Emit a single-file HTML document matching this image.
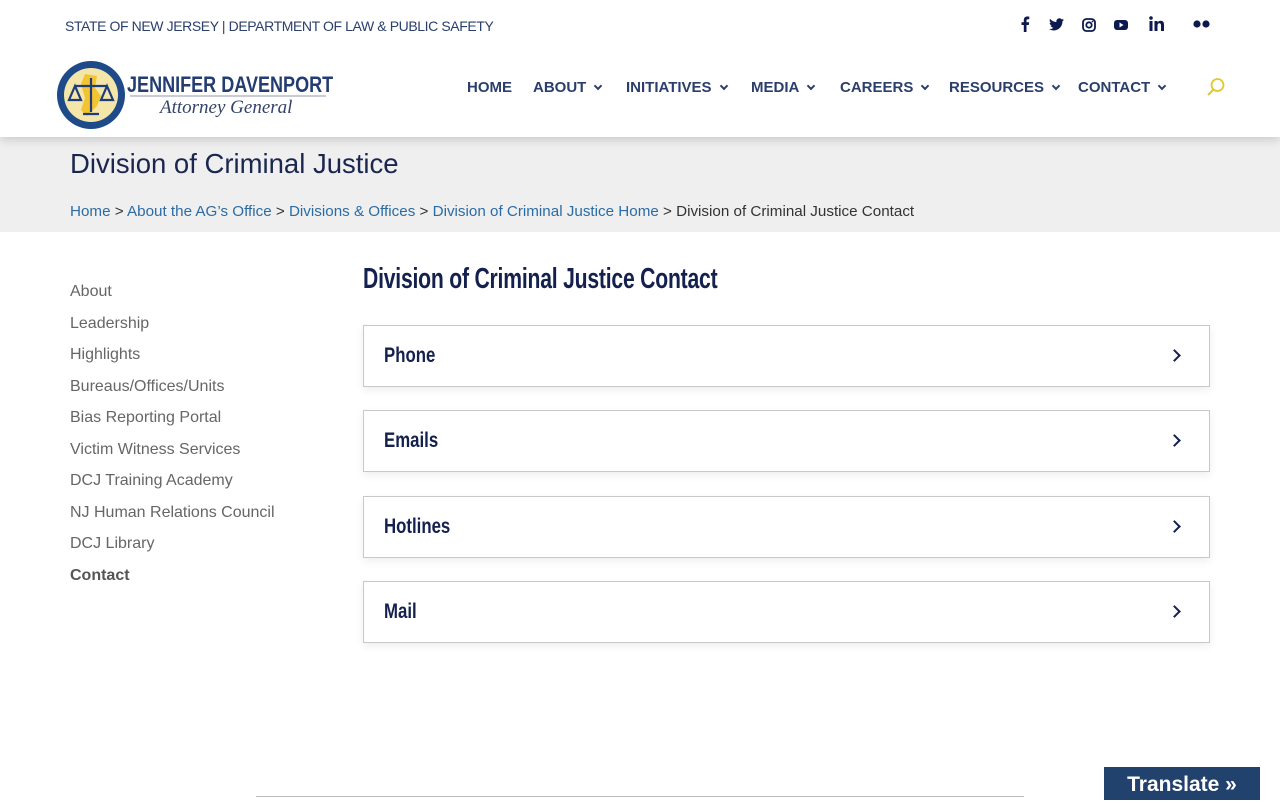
<!DOCTYPE html>
<html><head><meta charset="utf-8"><style>
*{margin:0;padding:0;box-sizing:border-box}
body{width:1280px;height:800px;overflow:hidden;background:#fff;font-family:"Liberation Sans",sans-serif;position:relative}
.top{position:absolute;left:65px;top:18px;font-size:14px;color:#2a3f6b;letter-spacing:-0.4px}
.soc{position:absolute;top:16px;color:#0d1a4f}
header{position:absolute;left:0;top:0;width:1280px;height:137px;background:#fff;box-shadow:0 2px 10px rgba(0,0,0,.18);z-index:2}
.nav{position:absolute;top:79px;font-size:15px;font-weight:bold;color:#2a3f6b;white-space:nowrap}
.nav span{position:absolute;white-space:nowrap}
.chev{display:inline-block;width:6px;height:6px;border-right:2px solid #2a3f6b;border-bottom:2px solid #2a3f6b;transform:rotate(45deg);margin-left:9px;position:relative;top:-3px}
.band{position:absolute;top:137px;left:0;width:1280px;height:95px;background:#efefef}
.band h1{position:absolute;left:70px;top:11px;font-weight:normal;font-size:27.5px;color:#1a2650}
.bc{position:absolute;left:70px;top:66px;font-size:15.2px;color:#333;white-space:nowrap}
.bc a{color:#2b6ca5;text-decoration:none}
.side{position:absolute;left:70px;top:283px;font-size:16px;color:#666}
.side div{height:31.5px}
.h2{position:absolute;left:363px;top:263px;font-size:29px;font-weight:bold;color:#14204d;transform:scaleX(.73);transform-origin:left;white-space:nowrap;letter-spacing:-.3px}
.acc{position:absolute;left:363px;width:847px;height:62px;border:1px solid #c8c8c8;box-shadow:0 3px 8px rgba(0,0,0,.07)}
.acc b{position:absolute;left:20px;top:18px;font-size:21px;color:#14204d;transform:scaleX(.8);transform-origin:left}
.acc i{position:absolute;right:30px;top:25px;width:9px;height:9px;border-right:2px solid #14204d;border-top:2px solid #14204d;transform:rotate(45deg)}
.tr{position:absolute;left:1104px;top:767px;width:156px;height:33px;background:#22426e;color:#fff;font-weight:bold;font-size:21px;text-align:center;line-height:36px}
.line{position:absolute;left:256px;top:796px;width:768px;height:1px;background:#bbb}
</style></head><body>
<header>
<div class="top">STATE OF NEW JERSEY | DEPARTMENT OF LAW &amp; PUBLIC SAFETY</div>
<svg class="soc" style="left:1020px" width="10" height="16" viewBox="0 0 10 16"><path d="M6.5 16V9h2.3l.4-2.8H6.5V4.5c0-.8.3-1.3 1.4-1.3h1.4V.7C9 .6 8.2.5 7.3.5 5.2.5 3.8 1.8 3.8 4.1v2.1H1.5V9h2.3v7z" fill="#0d1a4f"/></svg>
<svg class="soc" style="left:1049px;top:18px" width="15" height="13" viewBox="0 0 24 20"><path d="M24 2.4c-.9.4-1.8.7-2.8.8 1-.6 1.8-1.6 2.2-2.7-1 .6-2 1-3.1 1.2A4.9 4.9 0 0 0 11.900 6C7.7 5.8 4.1 3.9 1.7.9c-1.4 2.4-.5 5 1.5 6.6-.8 0-1.6-.3-2.2-.6 0 2.4 1.7 4.4 3.9 4.8-.7.2-1.5.2-2.2.1.6 2 2.4 3.4 4.600 3.4A9.9 9.9 0 0 1 0 17.300 14 14 0 0 0 7.5 19.5c9.1 0 14.3-7.7 14-14.6 1-.7 1.8-1.5 2.5-2.5z" fill="#0d1a4f"/></svg>
<svg class="soc" style="left:1082px;top:18px" width="14" height="14" viewBox="0 0 14 14"><rect x="1" y="1" width="12" height="12" rx="3.5" fill="none" stroke="#0d1a4f" stroke-width="1.8"/><circle cx="7" cy="7" r="2.7" fill="none" stroke="#0d1a4f" stroke-width="1.8"/><circle cx="10.5" cy="3.5" r=".9" fill="#0d1a4f"/></svg>
<svg class="soc" style="left:1114px;top:20px" width="14" height="10" viewBox="0 0 14 10"><rect width="14" height="10" rx="3" fill="#0d1a4f"/><path d="M5.5 2.5v5l4-2.5z" fill="#fff"/></svg>
<svg class="soc" style="left:1149px;top:16px" width="15" height="15" viewBox="0 0 15 15"><rect x="0.5" y="5" width="3" height="10" fill="#0d1a4f"/><circle cx="2" cy="2" r="1.8" fill="#0d1a4f"/><path d="M5.5 5h3v1.5c.6-1 1.7-1.8 3.2-1.8 2.3 0 3.3 1.4 3.3 4V15h-3V9.5c0-1.4-.4-2.2-1.6-2.2S8.5 8.3 8.5 9.6V15h-3z" fill="#0d1a4f"/></svg>
<svg class="soc" style="left:1193px;top:20px" width="18" height="8"><circle cx="4" cy="4" r="3.6" fill="#0d1a4f"/><circle cx="13" cy="4" r="3.6" fill="#0d1a4f"/></svg>
<svg style="position:absolute;left:55px;top:60px" width="72" height="70" viewBox="0 0 72 70"><circle cx="36" cy="35" r="34" fill="#1e4a8a"/><circle cx="36" cy="35" r="27" fill="#f3e6a8"/><path d="M30 14l12 2-2 12 6 8-4 10-10 10-6-6 4-12-4-14z" fill="#f2c431"/><path d="M36 18v34M20 26h32M20 26l-6 14h12zM52 26l-6 14h12zM28 54h16" stroke="#1e3c7a" stroke-width="2.2" fill="none"/></svg>
<div style="position:absolute;left:127px;top:72px;font-size:22px;font-weight:bold;color:#233c72;transform:scaleX(.82);transform-origin:left;white-space:nowrap">JENNIFER DAVENPORT</div>
<div style="position:absolute;left:130px;top:95px;width:196px;height:2px;background:#c9ccd6"></div>
<div style="position:absolute;left:160px;top:97px;font-family:'Liberation Serif',serif;font-style:italic;font-size:19px;color:#34436b">Attorney General</div>
<div class="nav">
<span style="left:467px">HOME</span>
<span style="left:533px">ABOUT<i class="chev"></i></span>
<span style="left:626px">INITIATIVES<i class="chev"></i></span>
<span style="left:751px">MEDIA<i class="chev"></i></span>
<span style="left:840px">CAREERS<i class="chev"></i></span>
<span style="left:949px">RESOURCES<i class="chev"></i></span>
<span style="left:1078px">CONTACT<i class="chev"></i></span>
</div>
<svg style="position:absolute;left:1206px;top:77px" width="20" height="20" viewBox="0 0 20 20"><circle cx="11.5" cy="8" r="6" fill="none" stroke="#e0c830" stroke-width="1.8"/><path d="M7.5 12.5L2 18" stroke="#e0c830" stroke-width="2"/></svg>
</header>
<div class="band"><h1>Division of Criminal Justice</h1>
<div class="bc"><a>Home</a> &gt; <a>About the AG’s Office</a> &gt; <a>Divisions &amp; Offices</a> &gt; <a>Division of Criminal Justice Home</a> &gt; Division of Criminal Justice Contact</div></div>
<div class="side">
<div>About</div><div>Leadership</div><div>Highlights</div><div>Bureaus/Offices/Units</div><div>Bias Reporting Portal</div><div>Victim Witness Services</div><div>DCJ Training Academy</div><div>NJ Human Relations Council</div><div>DCJ Library</div><div style="font-weight:bold;color:#555">Contact</div>
</div>
<div class="h2">Division of Criminal Justice Contact</div>
<div class="acc" style="top:325px"><b>Phone</b><i></i></div>
<div class="acc" style="top:410px"><b>Emails</b><i></i></div>
<div class="acc" style="top:496px"><b>Hotlines</b><i></i></div>
<div class="acc" style="top:581px"><b>Mail</b><i></i></div>
<div class="line"></div>
<div class="tr">Translate »</div>
</body></html>
